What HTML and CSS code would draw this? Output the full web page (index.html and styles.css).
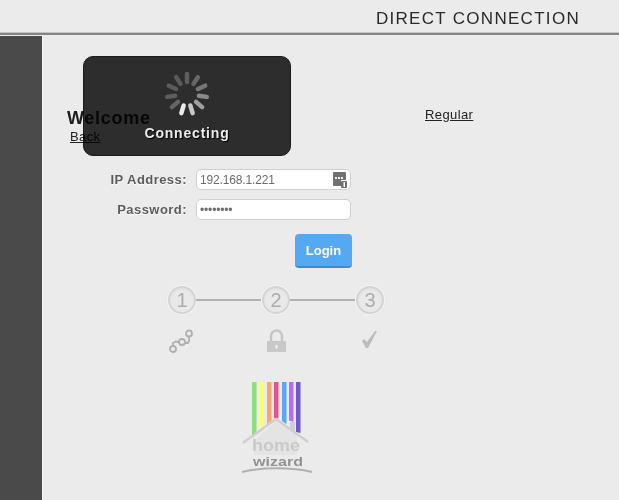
FILE: index.html
```html
<!DOCTYPE html>
<html lang="en">
<head>
    <meta charset="UTF-8">
    <title>Direct Connection</title>
    <link rel="stylesheet" href="styles.css">
</head>
<body>

<header class="topbar">
    <h1 class="topbar-title">DIRECT CONNECTION</h1>
</header>

<div class="page">
    <aside class="sidebar"></aside>

    <main class="content">
        <div class="overlay">
            <svg class="spinner" width="48" height="48" viewBox="-24 -24 48 48">
                <g stroke-width="4.5" stroke-linecap="round">
                    <line x1="0" y1="-12" x2="0" y2="-20" stroke="#666666"/>
                    <line x1="0" y1="-12" x2="0" y2="-20" stroke="#707070" transform="rotate(32.7)"/>
                    <line x1="0" y1="-12" x2="0" y2="-20" stroke="#808080" transform="rotate(65.4)"/>
                    <line x1="0" y1="-12" x2="0" y2="-20" stroke="#969696" transform="rotate(98.2)"/>
                    <line x1="0" y1="-12" x2="0" y2="-20" stroke="#adadad" transform="rotate(130.9)"/>
                    <line x1="0" y1="-12" x2="0" y2="-20" stroke="#d8d8d8" transform="rotate(163.6)"/>
                    <line x1="0" y1="-12" x2="0" y2="-20" stroke="#ffffff" transform="rotate(196.4)"/>
                    <line x1="0" y1="-12" x2="0" y2="-20" stroke="#6e6e6e" transform="rotate(229.1)"/>
                    <line x1="0" y1="-12" x2="0" y2="-20" stroke="#666666" transform="rotate(261.8)"/>
                    <line x1="0" y1="-12" x2="0" y2="-20" stroke="#626262" transform="rotate(294.5)"/>
                    <line x1="0" y1="-12" x2="0" y2="-20" stroke="#626262" transform="rotate(327.3)"/>
                </g>
            </svg>
            <div class="overlay-text">Connecting</div>
        </div>

        <div class="intro">
            <div class="intro-left">
                <h2 class="welcome">Welcome</h2>
                <a class="link back" href="#">Back</a>
            </div>
            <a class="link regular" href="#">Regular</a>
        </div>

        <form class="login-form">
            <label class="field-label">IP Address:</label>
            <div class="field">
                <input class="field-input" type="text" value="192.168.1.221">
                <svg class="field-icon" width="14" height="16" viewBox="0 0 14 16">
                    <path d="M1 0h11a1 1 0 0 1 1 1v7H8v6H1a1 1 0 0 1-1-1V1a1 1 0 0 1 1-1z" fill="#707070"/>
                    <rect x="2" y="5" width="2" height="2" fill="#eee"/>
                    <rect x="5" y="5" width="2" height="2" fill="#eee"/>
                    <rect x="8" y="5" width="2" height="2" fill="#eee"/>
                    <rect x="8" y="9" width="6" height="7" rx="1" fill="#707070"/>
                    <rect x="10.500" y="10" width="1.500" height="5" fill="#fff"/>
                </svg>
            </div>
            <label class="field-label">Password:</label>
            <div class="field">
                <input class="field-input" type="password" value="password">
            </div>
        </form>

        <div class="actions">
            <button class="login-btn" type="button">Login</button>
        </div>

        <div class="steps">
            <span class="step">1</span>
            <span class="step-line"></span>
            <span class="step">2</span>
            <span class="step-line"></span>
            <span class="step">3</span>
        </div>

        <div class="step-icons">
            <svg width="28" height="24" viewBox="0 0 28 24" fill="none" stroke="#b0b0b0" stroke-width="1.800">
                <circle cx="5" cy="20" r="3"/>
                <circle cx="14" cy="13" r="3"/>
                <circle cx="21" cy="4.500" r="3"/>
                <path d="M5 17v-3l3-1.500 3 .5M17 14h3l1-2v-4.500"/>
            </svg>
            <svg width="28" height="24" viewBox="0 0 28 24">
                <path d="M9 12V7a5.500 5.500 0 0 1 11 0v5" fill="none" stroke="#c6c6c6" stroke-width="2.500"/>
                <rect x="5" y="12" width="19" height="11" fill="#c8c8c8"/>
                <rect x="13.500" y="16" width="2" height="4" fill="#f0f0f0"/>
            </svg>
            <svg width="28" height="24" viewBox="0 0 28 24">
                <path d="M6 12l2-2 3 3 8-11h2l-9 17h-2z" fill="#bcbcbc"/>
            </svg>
        </div>

        <svg class="logo" width="78" height="98" viewBox="0 0 78 98">
            <path d="M12 2h4.500v51l-4.500 3z" fill="#8de07a"/>
            <path d="M19 2h4.500v44l-4.500 3z" fill="#ffff66"/>
            <path d="M27 2h4.500v39l-4.500 3z" fill="#f2a96b"/>
            <path d="M34 2h4.500v36l-2.200 1-2.300-1z" fill="#e0568f"/>
            <path d="M42 2h4.500v42l-4.500-3z" fill="#5aa9f0"/>
            <path d="M49 2h4.500v40l-4.500-1.500z" fill="#b86cf2"/>
            <path d="M56 2h4.500v51l-4.500-1z" fill="#6f55d6"/>
            <path d="M14 61l22-20 21 14v20H14z" fill="#e4e4e4"/>
            <path d="M3 63l33-24 32 23" fill="none" stroke="#cfcfcf" stroke-width="2.500"/>
            <path d="M50 48v-6h5v10z" fill="#cfcfcf"/>
            <text class="logo-home" x="12" y="71" textLength="48" lengthAdjust="spacingAndGlyphs">home</text>
            <text class="logo-wizard" x="13" y="86" textLength="50" lengthAdjust="spacingAndGlyphs">wizard</text>
            <path d="M2 92c20-5 50-5 70 0" fill="none" stroke="#b0b0b0" stroke-width="2"/>
        </svg>
    </main>
</div>

</body>
</html>
```

FILE: styles.css
```css
html, body {
    margin: 0;
    height: 100%;
}
body {
    font-family: "Liberation Sans", Arial, sans-serif;
    background-color: #ebebeb;
    color: #222;
    display: flex;
    flex-direction: column;
    overflow: hidden;
}
.topbar {
    height: 29px;
    flex: none;
    display: flex;
    justify-content: flex-end;
    align-items: center;
    padding-top: 4px;
    padding-right: 39px;
    border-bottom: 2px solid #858585;
    box-shadow: inset 0 -1px 0 #c4c4c4;
}
.topbar-title {
    margin: 0;
    font-size: 17px;
    font-weight: normal;
    letter-spacing: 1.3px;
    color: #2a2a2a;
}
.page {
    flex: 1;
    display: flex;
    margin-top: 1px;
}
.sidebar {
    width: 42px;
    flex: none;
    background: #4a4a4a;
    box-shadow: 1px 0 0 #f6f6f6;
}
.content {
    flex: 1;
    position: relative;
}
.overlay {
    position: absolute;
    left: 41px;
    top: 20px;
    width: 208px;
    height: 100px;
    box-sizing: border-box;
    padding-top: 13px;
    background: #303030;
    border: 1px solid #1c1c1c;
    border-radius: 10px;
    box-shadow: 0 -1px 0 #fff;
    display: flex;
    flex-direction: column;
    align-items: center;
    z-index: 2;
    mix-blend-mode: multiply;
}
.spinner {
    display: block;
}
.overlay-text {
    margin-top: 7px;
    font-size: 14px;
    font-weight: bold;
    letter-spacing: 0.8px;
    color: #fff;
    text-shadow: 1px 1px 1px #000;
}
.intro {
    display: flex;
    padding-top: 72px;
    padding-left: 25px;
}
.intro-left {
    width: 358px;
    flex: none;
}
.welcome {
    margin: 0;
    font-size: 18px;
    line-height: 21px;
    letter-spacing: 0.7px;
    color: #1d1d1d;
}
.link {
    font-size: 13px;
    letter-spacing: 0.4px;
    color: #222;
}
.back {
    display: block;
    margin-left: 3px;
    line-height: 15px;
}
.regular {
    line-height: 15px;
    margin-top: -1px;
}
.login-form {
    display: grid;
    grid-template-columns: 145px 155px;
    column-gap: 9px;
    row-gap: 9px;
    align-items: center;
    margin-top: 25px;
}
.field-label {
    text-align: right;
    font-size: 13px;
    font-weight: bold;
    letter-spacing: 0.45px;
    color: #5c5c5c;
    text-shadow: 0 1px 0 #fff;
}
.field {
    position: relative;
    height: 21px;
}
.field-input {
    display: block;
    width: 100%;
    height: 100%;
    box-sizing: border-box;
    padding: 0 3px;
    border: 1px solid #cfcfcf;
    border-radius: 5px;
    background: #fff;
    font-family: "Liberation Sans", Arial, sans-serif;
    font-size: 12px;
    letter-spacing: -0.15px;
    color: #6b6b6b;
    outline: none;
}
.field-icon {
    position: absolute;
    right: 4px;
    top: 3px;
}
.actions {
    padding-left: 253px;
    margin-top: 14px;
}
.login-btn {
    display: block;
    width: 57px;
    height: 34px;
    padding: 0;
    border: none;
    border-bottom: 2px solid #4089cc;
    border-radius: 4px;
    background: #55a8f2;
    font-family: "Liberation Sans", Arial, sans-serif;
    font-size: 13px;
    font-weight: bold;
    color: #fff;
}
.steps {
    display: flex;
    align-items: center;
    width: 216px;
    margin-left: 126px;
    margin-top: 18px;
}
.step {
    width: 24px;
    height: 24px;
    flex: none;
    display: flex;
    justify-content: center;
    align-items: center;
    border: 2px solid #d4d4d4;
    border-radius: 50%;
    background: #e9e9e9;
    box-shadow: 0 0 0 1px #f4f4f4, inset 0 1px 2px #dcdcdc;
    font-size: 20px;
    color: #adadad;
}
.step-line {
    flex: 1;
    height: 2px;
    background: #b2b2b2;
}
.step-icons {
    display: flex;
    justify-content: space-between;
    width: 216px;
    margin-left: 126px;
    margin-top: 15px;
}
.logo {
    display: block;
    margin-left: 198px;
    margin-top: 27px;
}
.logo-home {
    font-size: 16px;
    font-weight: bold;
    fill: #c9c9c9;
}
.logo-wizard {
    font-size: 13px;
    font-weight: bold;
    fill: #929292;
}
```
